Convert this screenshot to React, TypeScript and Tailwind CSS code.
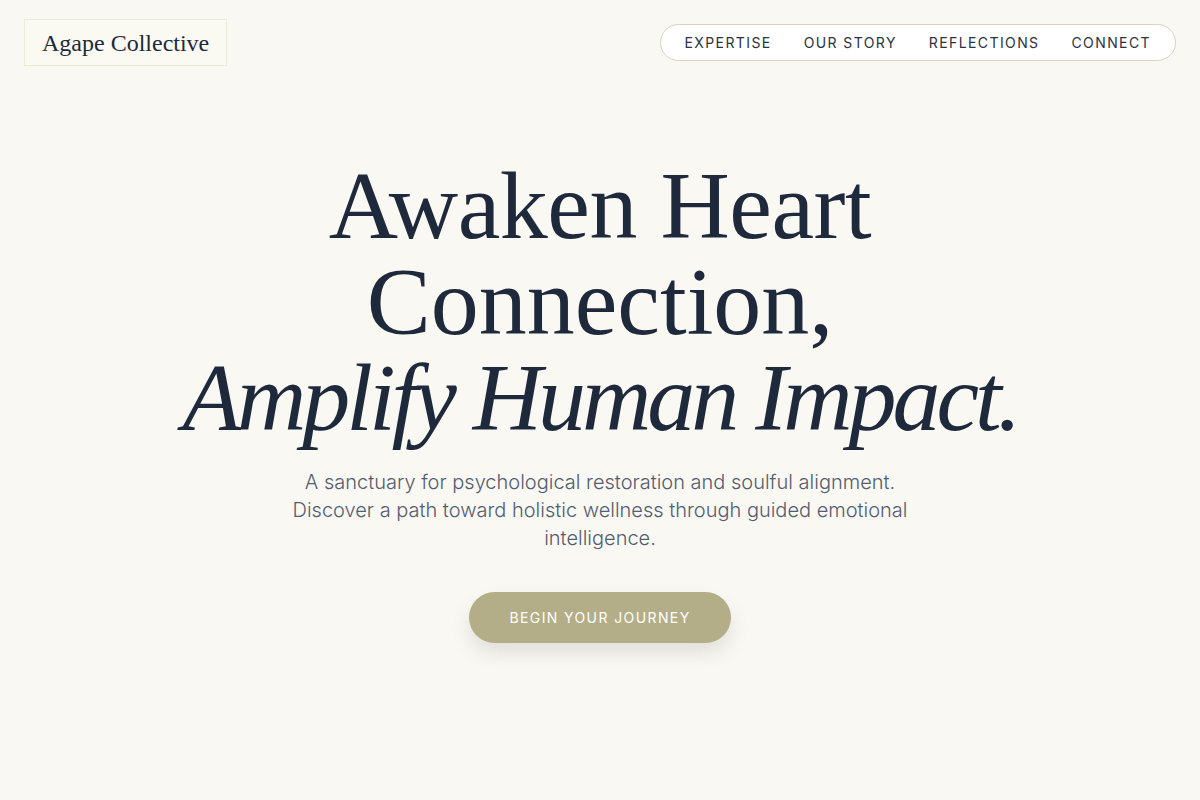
export default function App() {
  const nav = ['EXPERTISE', 'OUR STORY', 'REFLECTIONS', 'CONNECT'];

  return (
    <div className="min-h-screen bg-[#f9f8f3] font-['Inter',sans-serif] text-[#1e293b]">
      <header className="flex items-center justify-between px-6 pt-[19px]">
        <div className="h-[47px] flex items-center px-[17px] border border-[#ecebd6] bg-[#fafaf2]">
          <span className="font-['Liberation_Serif',serif] text-[24px] font-medium text-[#1e2a3b] leading-none">
            Agape Collective
          </span>
        </div>
        <nav className="h-[37px] flex items-center gap-8 px-6 rounded-full border border-[#d7d5bd] bg-white">
          {nav.map((item) => (
            <a key={item} href="#" className="text-[14px] tracking-[0.1em] text-[#2b3240] leading-none">
              {item}
            </a>
          ))}
        </nav>
      </header>

      <main className="flex flex-col items-center pt-[92px] text-center">
        <h1 className="font-['Liberation_Serif',serif] text-[96px] leading-[96px] font-normal text-[#1e293b]">
          <span className="block tracking-[-0.005em]">Awaken Heart</span>
          <span className="block">Connection,</span>
          <span className="block italic tracking-[-0.042em]">Amplify Human Impact.</span>
        </h1>

        <p className="mt-[22px] max-w-[620px] text-[20px] leading-[28px] text-[#535d6e] font-light">
          A sanctuary for psychological restoration and soulful alignment. Discover a path toward holistic wellness through guided emotional intelligence.
        </p>

        <button className="mt-10 h-[51px] px-10 rounded-full bg-[#b3ad88] text-white text-[14px] tracking-[0.1em] shadow-[0_10px_20px_rgba(0,0,0,0.1)]">
          BEGIN YOUR JOURNEY
        </button>
      </main>
    </div>
  );
}
